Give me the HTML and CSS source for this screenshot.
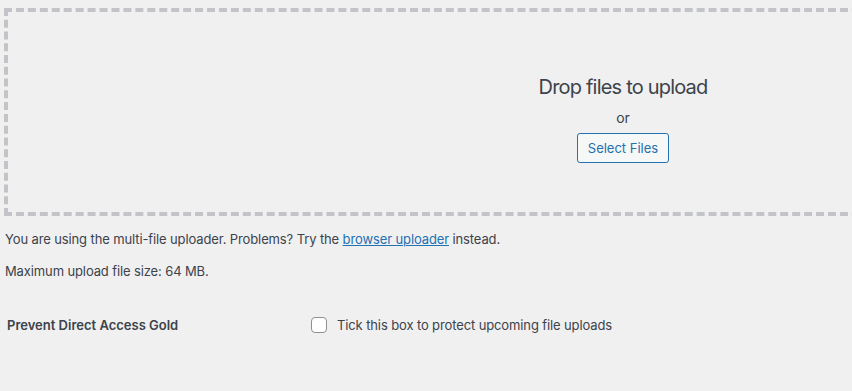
FILE: index.html
```html
<!DOCTYPE html>
<html lang="en">
<head>
    <meta charset="UTF-8">
    <meta name="viewport" content="width=device-width, initial-scale=1.0">
    <title>Upload New Media</title>
    <link rel="stylesheet" href="styles.css">
</head>
<body>
    <div class="uploader">
        <div class="drag-drop-area">
            <div class="drag-drop-inside">
                <p class="drag-drop-info">Drop files to upload</p>
                <p class="drag-drop-or">or</p>
                <p class="drag-drop-buttons">
                    <button class="button">Select Files</button>
                </p>
            </div>
        </div>

        <p class="upload-flash-bypass">You are using the multi-file uploader. Problems? Try the <a href="#">browser uploader</a> instead.</p>
        <p class="max-upload-size">Maximum upload file size: 64 MB.</p>

        <div class="form-row">
            <div class="form-label">Prevent Direct Access Gold</div>
            <label class="form-field">
                <input type="checkbox" class="checkbox">
                <span>Tick this box to protect upcoming file uploads</span>
            </label>
        </div>
    </div>
</body>
</html>
```

FILE: styles.css
```css
html, body {
    overflow: hidden;
}

body {
    margin: 0;
    background-color: #f0f0f1;
    color: #3c434a;
    font-family: Inter, "Liberation Sans", sans-serif;
    font-size: 13px;
    line-height: 1.4;
    letter-spacing: -0.12px;
}

.uploader {
    padding: 8px 0 0 4px;
}

.drag-drop-area {
    width: 1230px;
    height: 200px;
    border: 4px dashed #c3c4c7;
}

.drag-drop-inside {
    width: 250px;
    margin: 65px auto 0;
    text-align: center;
}

.drag-drop-inside p {
    margin: 5px auto;
    font-size: 14px;
    line-height: 20px;
}

.drag-drop-inside .drag-drop-info {
    font-size: 20px;
    letter-spacing: -0.8px;
}

.drag-drop-inside .drag-drop-or {
    margin-top: 11px;
}

.drag-drop-buttons {
    height: 30px;
}

.button {
    font-family: inherit;
    font-size: 13px;
    line-height: 28px;
    min-height: 30px;
    padding: 0 10px;
    color: #2271b1;
    background-color: #f6f7f7;
    border: 1px solid #2271b1;
    border-radius: 3px;
    cursor: pointer;
}

.upload-flash-bypass,
.max-upload-size {
    margin: 0;
    padding-left: 1px;
}

.upload-flash-bypass {
    margin-top: 14px;
}

.max-upload-size {
    margin-top: 14px;
}

.upload-flash-bypass a {
    color: #2271b1;
}

.form-row {
    display: flex;
    align-items: center;
    margin-top: 36px;
    padding-left: 3px;
}

.form-label {
    width: 304px;
    font-weight: 600;
    font-size: 13px;
    letter-spacing: 0;
}

.form-field {
    display: flex;
    align-items: center;
    gap: 10px;
}

.checkbox {
    appearance: none;
    width: 16px;
    height: 16px;
    margin: 0;
    border: 1px solid #8c8f94;
    border-radius: 4px;
    background-color: #fff;
}
```
